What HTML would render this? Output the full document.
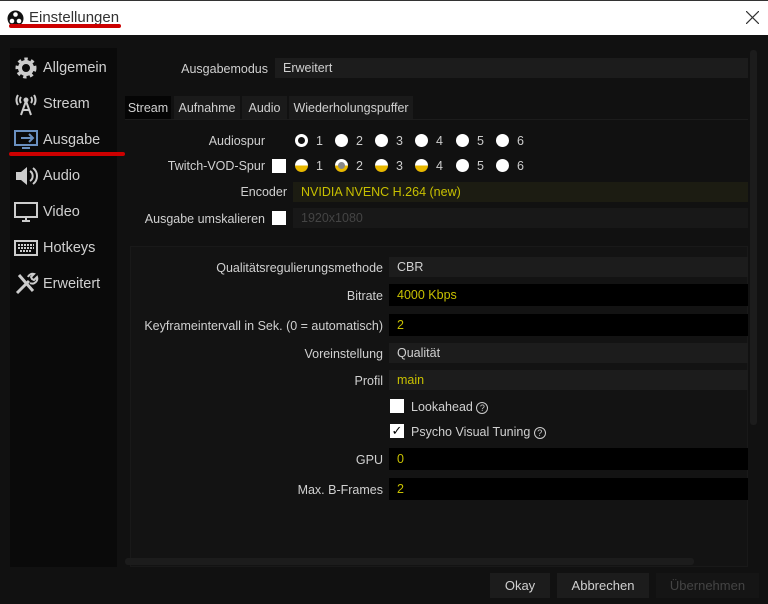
<!DOCTYPE html><html><head><meta charset="utf-8"><style>
*{margin:0;padding:0;box-sizing:border-box}
body{width:768px;height:604px;background:#111;font-family:"Liberation Sans",sans-serif;font-size:12.5px;color:#d0d0d0;position:relative;overflow:hidden}
.a{position:absolute}
.lbl{position:absolute;text-align:right;white-space:nowrap;color:#d0d0d0}
.f{position:absolute;background:#1c1c1c;padding-left:8px;white-space:nowrap;display:flex;align-items:center}
.blk{background:#000}
.y{color:#c8c000}
.side div.it{position:absolute;left:0;width:107px;height:30px;display:flex;align-items:center;font-size:14.5px;color:#d0d0d0}
.side svg{margin:0 4px 0 3px}
.r{position:absolute;width:13px;height:13px;border-radius:50%;background:#fff}
.n{position:absolute;font-size:12.5px;color:#ccc}
.cb{position:absolute;width:14px;height:14px;background:#fff}
.btn{position:absolute;top:573px;height:25px;background:#1c1c1c;display:flex;align-items:center;justify-content:center;font-size:13px}
</style></head><body>
<div class="a" style="left:0;top:0;width:768px;height:35px;background:#fff;border-top:1px solid #333"></div>
<svg class="a" style="left:7px;top:10px" width="17" height="17" viewBox="0 0 17 17"><circle cx="8.5" cy="8.5" r="8" fill="#111"/><circle cx="8.5" cy="4.5" r="2.3" fill="#fff"/><circle cx="5" cy="11" r="2.3" fill="#fff"/><circle cx="12" cy="11" r="2.3" fill="#fff"/></svg>
<div class="a" style="left:29px;top:9px;font-size:15px;color:#333">Einstellungen</div>
<div class="a" style="left:9px;top:24px;width:112px;height:4px;background:#c00;border-radius:2px"></div>
<svg class="a" style="left:746px;top:11px" width="13" height="13" viewBox="0 0 13 13"><path d="M0 0L13 13M13 0L0 13" stroke="#333" stroke-width="1.2"/></svg>

<div class="side a" style="left:10px;top:48px;width:107px;height:519px;background:#0a0a0a">
<div class="it" style="top:5px"><svg width="26" height="26" viewBox="0 0 26 26"><circle cx="13" cy="13" r="8" fill="none" stroke="#ccc" stroke-width="5" stroke-dasharray="3 3"/><circle cx="13" cy="13" r="6" fill="none" stroke="#ccc" stroke-width="4"/></svg>Allgemein</div>
<div class="it" style="top:41px"><svg width="26" height="26" viewBox="0 0 26 26" fill="none" stroke="#ccc" stroke-width="2"><path d="M5 4a9 9 0 0 0 0 10M21 4a9 9 0 0 1 0 10M8 6a5 5 0 0 0 0 6M18 6a5 5 0 0 1 0 6M13 10L8 24M13 10l5 14M10 19h6"/><circle cx="13" cy="9" r="1.5" fill="#ccc"/></svg>Stream</div>
<div class="it" style="top:77px"><svg width="26" height="26" viewBox="0 0 26 26" fill="none" stroke="#6a90c0" stroke-width="2"><rect x="2" y="4" width="22" height="14"/><path d="M8 11h12M16 7l4 4-4 4M9 21h8"/></svg>Ausgabe</div>
<div class="it" style="top:113px"><svg width="26" height="26" viewBox="0 0 26 26"><path d="M3 9h5l6-5v18l-6-5H3z" fill="#ccc"/><path d="M17 8a6 6 0 0 1 0 10M20 5a10 10 0 0 1 0 16" stroke="#ccc" stroke-width="2" fill="none"/></svg>Audio</div>
<div class="it" style="top:149px"><svg width="26" height="26" viewBox="0 0 26 26" fill="none" stroke="#ccc" stroke-width="2"><rect x="2" y="4" width="22" height="14"/><path d="M9 22h8M13 18v4"/></svg>Video</div>
<div class="it" style="top:185px"><svg width="26" height="26" viewBox="0 0 26 26" fill="none" stroke="#ccc" stroke-width="2"><rect x="2" y="6" width="22" height="14"/><path d="M5 10h16M5 13h16M7 16h12" stroke-dasharray="2 1"/></svg>Hotkeys</div>
<div class="it" style="top:221px"><svg width="26" height="26" viewBox="0 0 26 26" stroke="#ccc" fill="none"><path d="M4 22L16 10" stroke-width="3"/><path d="M15 6a5 5 0 0 1 6-3l-3 3 1 2 2 1 3-3a5 5 0 0 1-7 6" stroke-width="2"/><path d="M6 4l14 16" stroke-width="3"/></svg>Erweitert</div>
</div>
<div class="a" style="left:9px;top:152px;width:116px;height:4px;background:#c00;border-radius:2px"></div>

<div class="lbl" style="left:150px;width:118px;top:62px">Ausgabemodus</div>
<div class="f" style="left:275px;top:58px;width:473px;height:20px">Erweitert</div>

<div class="a" style="left:125px;top:96px;width:46px;height:23px;background:#050505;display:flex;align-items:center;justify-content:center">Stream</div>
<div class="a" style="left:174px;top:96px;width:66px;height:23px;background:#1a1a1a;display:flex;align-items:center;justify-content:center">Aufnahme</div>
<div class="a" style="left:242px;top:96px;width:45px;height:23px;background:#1a1a1a;display:flex;align-items:center;justify-content:center">Audio</div>
<div class="a" style="left:289px;top:96px;width:124px;height:23px;background:#1a1a1a;display:flex;align-items:center;justify-content:center">Wiederholungspuffer</div>
<div class="a" style="left:125px;top:119px;width:623px;height:1px;background:#1c1c1c"></div>

<div class="lbl" style="left:150px;width:115px;top:134px">Audiospur</div>
<div class="r" style="left:295px;top:134px;background:#111;border:3px solid #fff"></div><div class="n" style="left:316px;top:134px">1</div>
<div class="r" style="left:335px;top:134px"></div><div class="n" style="left:356px;top:134px">2</div>
<div class="r" style="left:375px;top:134px"></div><div class="n" style="left:396px;top:134px">3</div>
<div class="r" style="left:415px;top:134px"></div><div class="n" style="left:436px;top:134px">4</div>
<div class="r" style="left:456px;top:134px"></div><div class="n" style="left:477px;top:134px">5</div>
<div class="r" style="left:496px;top:134px"></div><div class="n" style="left:517px;top:134px">6</div>

<div class="lbl" style="left:140px;width:125px;top:159px">Twitch-VOD-Spur</div>
<div class="cb" style="left:272px;top:159px"></div>
<div class="r" style="left:295px;top:159px;background:linear-gradient(#fff 50%,#e8b800 50%)"></div><div class="n" style="left:316px;top:159px">1</div>
<div class="r" style="left:335px;top:159px;background:linear-gradient(#fff 50%,#e8b800 50%)"><div style="position:absolute;left:3px;top:3px;width:7px;height:7px;border-radius:50%;background:#888"></div></div><div class="n" style="left:356px;top:159px">2</div>
<div class="r" style="left:375px;top:159px;background:linear-gradient(#fff 50%,#e8b800 50%)"></div><div class="n" style="left:396px;top:159px">3</div>
<div class="r" style="left:415px;top:159px;background:linear-gradient(#fff 50%,#e8b800 50%)"></div><div class="n" style="left:436px;top:159px">4</div>
<div class="r" style="left:456px;top:159px"></div><div class="n" style="left:477px;top:159px">5</div>
<div class="r" style="left:496px;top:159px"></div><div class="n" style="left:517px;top:159px">6</div>

<div class="lbl" style="left:150px;width:137px;top:185px">Encoder</div>
<div class="f y" style="left:293px;top:182px;width:455px;height:20px;background:#1c1c12">NVIDIA NVENC H.264 (new)</div>
<div class="lbl" style="left:130px;width:135px;top:212px">Ausgabe umskalieren</div>
<div class="cb" style="left:272px;top:211px"></div>
<div class="f" style="left:293px;top:208px;width:455px;height:20px;background:#181818;color:#444">1920x1080</div>

<div class="a" style="left:130px;top:246px;width:618px;height:321px;background:#131313;border:1px solid #191919"></div>
<div class="lbl" style="left:135px;width:248px;top:261px">Qualitätsregulierungsmethode</div>
<div class="f" style="left:389px;top:257px;width:359px;height:20px">CBR</div>
<div class="lbl" style="left:135px;width:248px;top:289px">Bitrate</div>
<div class="f blk y" style="left:389px;top:284px;width:359px;height:22px">4000 Kbps</div>
<div class="lbl" style="left:135px;width:248px;top:319px">Keyframeintervall in Sek. (0 = automatisch)</div>
<div class="f blk y" style="left:389px;top:314px;width:359px;height:22px">2</div>
<div class="lbl" style="left:135px;width:248px;top:347px">Voreinstellung</div>
<div class="f" style="left:389px;top:343px;width:359px;height:20px">Qualität</div>
<div class="lbl" style="left:135px;width:248px;top:374px">Profil</div>
<div class="f y" style="left:389px;top:370px;width:359px;height:20px">main</div>
<div class="cb" style="left:390px;top:399px"></div>
<div class="a" style="left:411px;top:400px">Lookahead <span style="display:inline-block;width:12px;height:12px;border:1px solid #ccc;border-radius:50%;font-size:9px;text-align:center;line-height:11px;vertical-align:middle">?</span></div>
<div class="cb" style="left:390px;top:424px;color:#000;font-size:13px;line-height:14px;text-align:center">✓</div>
<div class="a" style="left:411px;top:425px">Psycho Visual Tuning <span style="display:inline-block;width:12px;height:12px;border:1px solid #ccc;border-radius:50%;font-size:9px;text-align:center;line-height:11px;vertical-align:middle">?</span></div>
<div class="lbl" style="left:135px;width:248px;top:453px">GPU</div>
<div class="f blk y" style="left:389px;top:448px;width:359px;height:22px">0</div>
<div class="lbl" style="left:135px;width:248px;top:483px">Max. B-Frames</div>
<div class="f blk y" style="left:389px;top:478px;width:359px;height:22px">2</div>

<div class="a" style="left:750px;top:50px;width:7px;height:375px;background:#1c1c1c;border-radius:3px"></div>
<div class="a" style="left:125px;top:558px;width:569px;height:7px;background:#1c1c1c;border-radius:3px"></div>
<div class="btn" style="left:490px;width:60px">Okay</div>
<div class="btn" style="left:557px;width:92px">Abbrechen</div>
<div class="btn" style="left:656px;width:103px;background:#151515;color:#444">Übernehmen</div>
</body></html>
